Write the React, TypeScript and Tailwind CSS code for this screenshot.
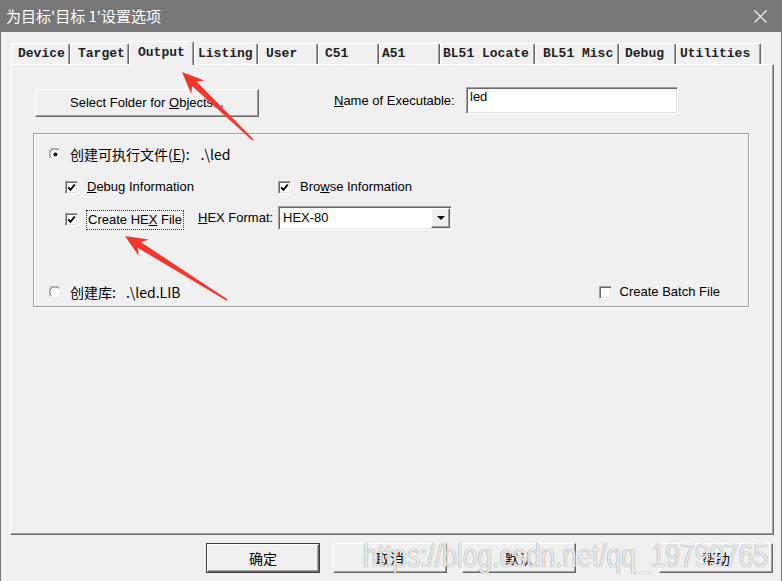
import React from 'react';

const sans = "font-['Liberation_Sans','Noto_Sans_CJK_SC',sans-serif]";
const cjk = "font-['Noto_Sans_CJK_SC','Liberation_Sans',sans-serif]";

const tabs = [
    { label: 'Device', cls: 'w-[59px] pl-[6px]' },
    { label: 'Target', cls: 'w-[59px] pl-[7px]' },
    { label: 'Output', cls: 'w-[65px] pl-[8px]', active: true },
    { label: 'Listing', cls: 'w-[64px] pl-[3px]' },
    { label: 'User', cls: 'w-[60px] pl-[7px]' },
    { label: 'C51', cls: 'w-[61px] pl-[6px]' },
    { label: 'A51', cls: 'w-[61px] pl-[2px]' },
    { label: 'BL51 Locate', cls: 'w-[95px] pl-[2px]' },
    { label: 'BL51 Misc', cls: 'w-[84px] pl-[7px]' },
    { label: 'Debug', cls: 'w-[57px] pl-[5px]' },
    { label: 'Utilities', cls: 'w-[85px] pl-[3px]' },
];

const raised = 'bg-[#f0f0f0] border border-t-white border-l-white border-r-[#696969] border-b-[#696969] shadow-[inset_-1px_-1px_0_#a0a0a0]';
const sunken = 'bg-white border border-t-[#a0a0a0] border-l-[#a0a0a0] border-r-white border-b-white shadow-[inset_1px_1px_0_#696969,inset_-1px_-1px_0_#e3e3e3]';

const CheckBox = ({ checked }: { checked: boolean }) => (
    <div className={`w-[13px] h-[13px] shrink-0 flex items-center justify-center ${sunken}`}>
        {checked && (
            <svg width="9" height="9" viewBox="0 0 9 9">
                <path d="M1.2 4.3 L3.5 6.8 L7.8 1.5" fill="none" stroke="#000" strokeWidth="1.9" />
            </svg>
        )}
    </div>
);

const Radio = ({ checked }: { checked: boolean }) => (
    <svg width="13" height="13" viewBox="0 0 13 13" className="shrink-0">
        <circle cx="6.5" cy="6.5" r="6" fill="#fff" />
        <path d="M1.3 10.2 A6 6 0 0 1 10.2 1.3" fill="none" stroke="#a0a0a0" strokeWidth="1" />
        <path d="M2.3 9.4 A4.9 4.9 0 0 1 9.4 2.3" fill="none" stroke="#696969" strokeWidth="1" />
        <path d="M10.7 2.3 A6 6 0 0 1 2.3 10.7" fill="none" stroke="#e3e3e3" strokeWidth="1" />
        {checked && <circle cx="6.5" cy="6.5" r="2" fill="#000" />}
    </svg>
);

function arrowPoints(tx: number, ty: number, ex: number, ey: number) {
    const dx = ex - tx;
    const dy = ey - ty;
    const len = Math.hypot(dx, dy);
    const ux = dx / len;
    const uy = dy / len;
    const nx = -uy;
    const ny = ux;
    const p = (d: number, w: number) => `${(tx + ux * d + nx * w).toFixed(1)},${(ty + uy * d + ny * w).toFixed(1)}`;
    return [p(0, 0), p(22, 9.5), p(17, 3.2), p(len, 0.8), p(len, -0.8), p(17, -3.2), p(22, -9.5)].join(' ');
}

const DialogButton = ({ label, isDefault }: { label: string; isDefault?: boolean }) => (
    <div className={`w-[114px] h-[30px] ${isDefault ? 'border border-[#404040]' : ''}`}>
        <div className={`w-full h-full flex items-center justify-center text-[14px] ${cjk} ${raised}`}>{label}</div>
    </div>
);

export default function App() {
    return (
        <div className={`relative w-[782px] h-[581px] overflow-hidden bg-[#f0f0f0] text-black ${sans}`}>
            {/* title bar */}
            <div className="h-[32px] bg-[#777777] flex items-center justify-between pl-[6px] pr-[15px]">
                <span className={`text-[15px] text-white ${cjk}`}>为目标'目标 1'设置选项</span>
                <svg width="13" height="13" viewBox="0 0 13 13">
                    <path d="M0.5 0.5 L12.5 12.5 M12.5 0.5 L0.5 12.5" stroke="#fff" strokeWidth="1.1" />
                </svg>
            </div>

            <div className="h-[549px] border-l border-r border-[#777777] pl-[9px] flex flex-col">
                {/* tabs */}
                <div className="flex items-end h-[23px] mt-[9px] ml-[1px] font-['Liberation_Mono',monospace] font-bold text-[13px] text-[#222]">
                    {tabs.map(t => (
                        <div
                            key={t.label}
                            className={`${t.cls} flex items-center whitespace-pre border-t border-l border-r border-t-white border-l-white border-r-[#696969] rounded-t-[2px] shadow-[inset_-1px_0_0_#a0a0a0] ${
                                t.active ? 'h-[24px] -mb-px relative z-10 bg-[#f0f0f0] pb-[2px]' : 'h-[21px]'
                            }`}
                        >
                            {t.label}
                        </div>
                    ))}
                </div>

                {/* panel */}
                <div className="w-[764px] h-[471px] border border-t-white border-l-white border-r-[#696969] border-b-[#696969] shadow-[inset_-1px_-1px_0_#a0a0a0] pl-[22px] pt-[22px] text-[13px]">
                    <div className="flex items-start h-[30px]">
                        <div className={`ml-[2px] mt-[2px] w-[224px] h-[28px] flex items-center justify-center ${raised}`}>
                            <span>Select Folder for <u>O</u>bjects...</span>
                        </div>
                        <div className="ml-[75px] h-[27px] w-[132px] flex items-center">
                            <span><u>N</u>ame of Executable:</span>
                        </div>
                        <div className={`w-[212px] h-[27px] pl-[3px] pt-[1px] leading-[16px] ${sunken}`}>led</div>
                    </div>

                    {/* group */}
                    <div className="mt-[16px] w-[716px] h-[174px] border border-[#a0a0a0] shadow-[inset_1px_1px_0_#fff,1px_1px_0_#fff] pt-[10px] pb-[4px]">
                        <div className="flex items-center h-[20px] pl-[15px] gap-[8px]">
                            <Radio checked />
                            <span className={`text-[14px] ${cjk}`}>
                                创建可执行文件(<u>E</u>):<span className="ml-[11px]">.\led</span>
                            </span>
                        </div>
                        <div className="flex items-center h-[20px] mt-[13px] pl-[31px]">
                            <div className="w-[213px] flex items-center gap-[9px]">
                                <CheckBox checked />
                                <span><u>D</u>ebug Information</span>
                            </div>
                            <div className="flex items-center gap-[9px]">
                                <CheckBox checked />
                                <span>Bro<u>w</u>se Information</span>
                            </div>
                        </div>
                        <div className="flex items-center h-[24px] mt-[9px] pl-[31px]">
                            <div className="w-[133px] flex items-center gap-[8px] pt-[3px]">
                                <CheckBox checked />
                                <div className="border border-dotted border-[#333] px-[1px] h-[20px] leading-[18px]">
                                    <span>Create HE<u>X</u> File</span>
                                </div>
                            </div>
                            <div className="w-[80px]">
                                <span><u>H</u>EX Format:</span>
                            </div>
                            <div className={`w-[174px] h-[24px] flex items-center justify-between pl-[4px] pr-[1px] ${sunken}`}>
                                <span>HEX-80</span>
                                <div className={`w-[19px] h-[20px] flex items-center justify-center ${raised}`}>
                                    <svg width="8" height="4" viewBox="0 0 8 4">
                                        <path d="M0 0 H8 L4 4 Z" fill="#000" />
                                    </svg>
                                </div>
                            </div>
                        </div>
                        <div className="flex items-center justify-between h-[20px] mt-[52px] pl-[15px] pr-[28px]">
                            <div className="flex items-center gap-[8px]">
                                <Radio checked={false} />
                                <span className={`text-[14px] ${cjk}`}>
                                    创建库:<span className="ml-[10px]">.\led.LIB</span>
                                </span>
                            </div>
                            <div className="flex items-center gap-[8px]">
                                <CheckBox checked={false} />
                                <span>Create Batch File</span>
                            </div>
                        </div>
                    </div>
                </div>

                {/* dialog buttons */}
                <div className="flex mt-[8px] ml-[196px]">
                    <DialogButton label="确定" isDefault />
                    <div className="ml-[13px]"><DialogButton label="取消" /></div>
                    <div className="ml-[15px]"><DialogButton label="默认" /></div>
                    <div className="ml-[83px]"><DialogButton label="帮助" /></div>
                </div>
            </div>

            {/* watermark */}
            <div className="absolute left-[363px] top-[539px] origin-left scale-x-[0.8] whitespace-nowrap text-[33px] leading-[33px] font-['Liberation_Sans',sans-serif] text-white/85 [text-shadow:0_0_1px_rgba(0,0,0,0.6)] pointer-events-none">
                https://blog.csdn.net/qq_19799765
            </div>

            {/* annotation arrows */}
            <svg className="absolute inset-0 pointer-events-none" width="782" height="581">
                <polygon points={arrowPoints(182, 72, 253, 140)} fill="#f2362b" />
                <polygon points={arrowPoints(125, 236, 227, 300)} fill="#f2362b" />
            </svg>
        </div>
    );
}
